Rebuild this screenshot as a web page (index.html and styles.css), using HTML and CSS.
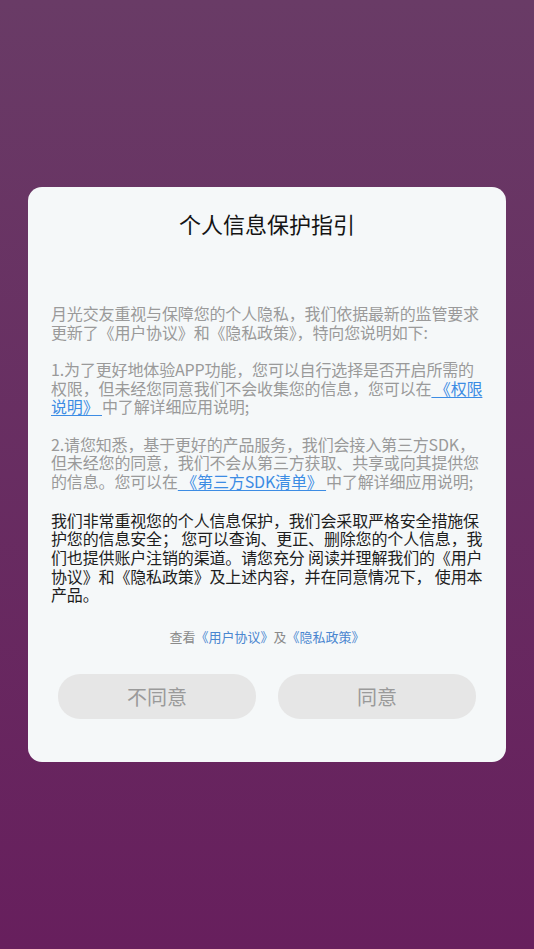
FILE: index.html
```html
<!DOCTYPE html>
<html lang="zh-CN">
<head>
<meta charset="utf-8">
<title>个人信息保护指引</title>
<link rel="stylesheet" href="styles.css">
</head>
<body>
<div class="screen">
  <div class="card">
    <h1 class="title">个人信息保护指引</h1>
    <div class="content">
      <p class="para muted">月光交友重视与保障您的个人隐私，我们依据最新的监管要求<br>更新了《用户协议》和《隐私政策》，特向您说明如下:</p>
      <p class="para muted">1.为了更好地体验APP功能，您可以自行选择是否开启所需的<br>权限，但未经您同意我们不会收集您的信息，您可以在<a class="link"> 《权限<br>说明》 </a>中了解详细应用说明;</p>
      <p class="para muted">2.请您知悉，基于更好的产品服务，我们会接入第三方SDK，<br>但未经您的同意，我们不会从第三方获取、共享或向其提供您<br>的信息。您可以在<a class="link"> 《第三方SDK清单》 </a>中了解详细应用说明;</p>
      <p class="para dark">我们非常重视您的个人信息保护，我们会采取严格安全措施保<br>护您的信息安全； 您可以查询、更正、删除您的个人信息，我<br>们也提供账户注销的渠道。请您充分 阅读并理解我们的《用户<br>协议》和《隐私政策》及上述内容，并在同意情况下， 使用本<br>产品。</p>
    </div>
    <div class="footer-links">查看<a class="flink">《用户协议》</a>及<a class="flink">《隐私政策》</a></div>
    <div class="actions">
      <button class="btn">不同意</button>
      <button class="btn">同意</button>
    </div>
  </div>
</div>
</body>
</html>
```
FILE: styles.css
```css
* { box-sizing: border-box; }
html, body { margin: 0; padding: 0; }
body {
  font-family: "Noto Sans CJK SC", "Noto Sans", sans-serif;
}
.screen {
  width: 534px;
  height: 949px;
  background: linear-gradient(180deg, #693b66 0%, #671f5d 100%);
  display: flex;
  flex-direction: column;
  align-items: center;
  padding-top: 187px;
}
.card {
  width: 478px;
  background: #f5f8f9;
  border-radius: 14px;
  padding: 22px 23px 43px;
  display: flex;
  flex-direction: column;
}
.title {
  margin: 0 0 67px;
  font-size: 22px;
  line-height: 28px;
  font-weight: 400;
  color: #141414;
  text-align: center;
}
.content { display: flex; flex-direction: column; }
.para {
  margin: 0 0 18.5px;
  font-size: 16px;
  line-height: 18.7px;
  white-space: nowrap;
  letter-spacing: -0.15px;
}
.para:last-child { margin-bottom: 0; }
.muted { color: #9a9a9a; }
.dark { color: #1e1e1e; }
.para + .dark { margin-top: 1.5px; }
.link {
  color: #3c8ce4;
  text-decoration: underline;
  text-underline-offset: 2px;
}
.footer-links {
  margin-top: 24px;
  font-size: 13px;
  line-height: 18px;
  color: #8a8a8a;
  text-align: center;
}
.flink { color: #4a86d0; }
.actions {
  margin-top: 28px;
  padding: 0 7px;
  display: flex;
  gap: 22px;
}
.btn {
  flex: 1;
  height: 45px;
  border: none;
  border-radius: 22px;
  background: #e6e6e6;
  color: #9a9a9a;
  font-family: "Noto Sans CJK SC", "Noto Sans", sans-serif;
  font-size: 20px;
  padding: 0;
}
```
